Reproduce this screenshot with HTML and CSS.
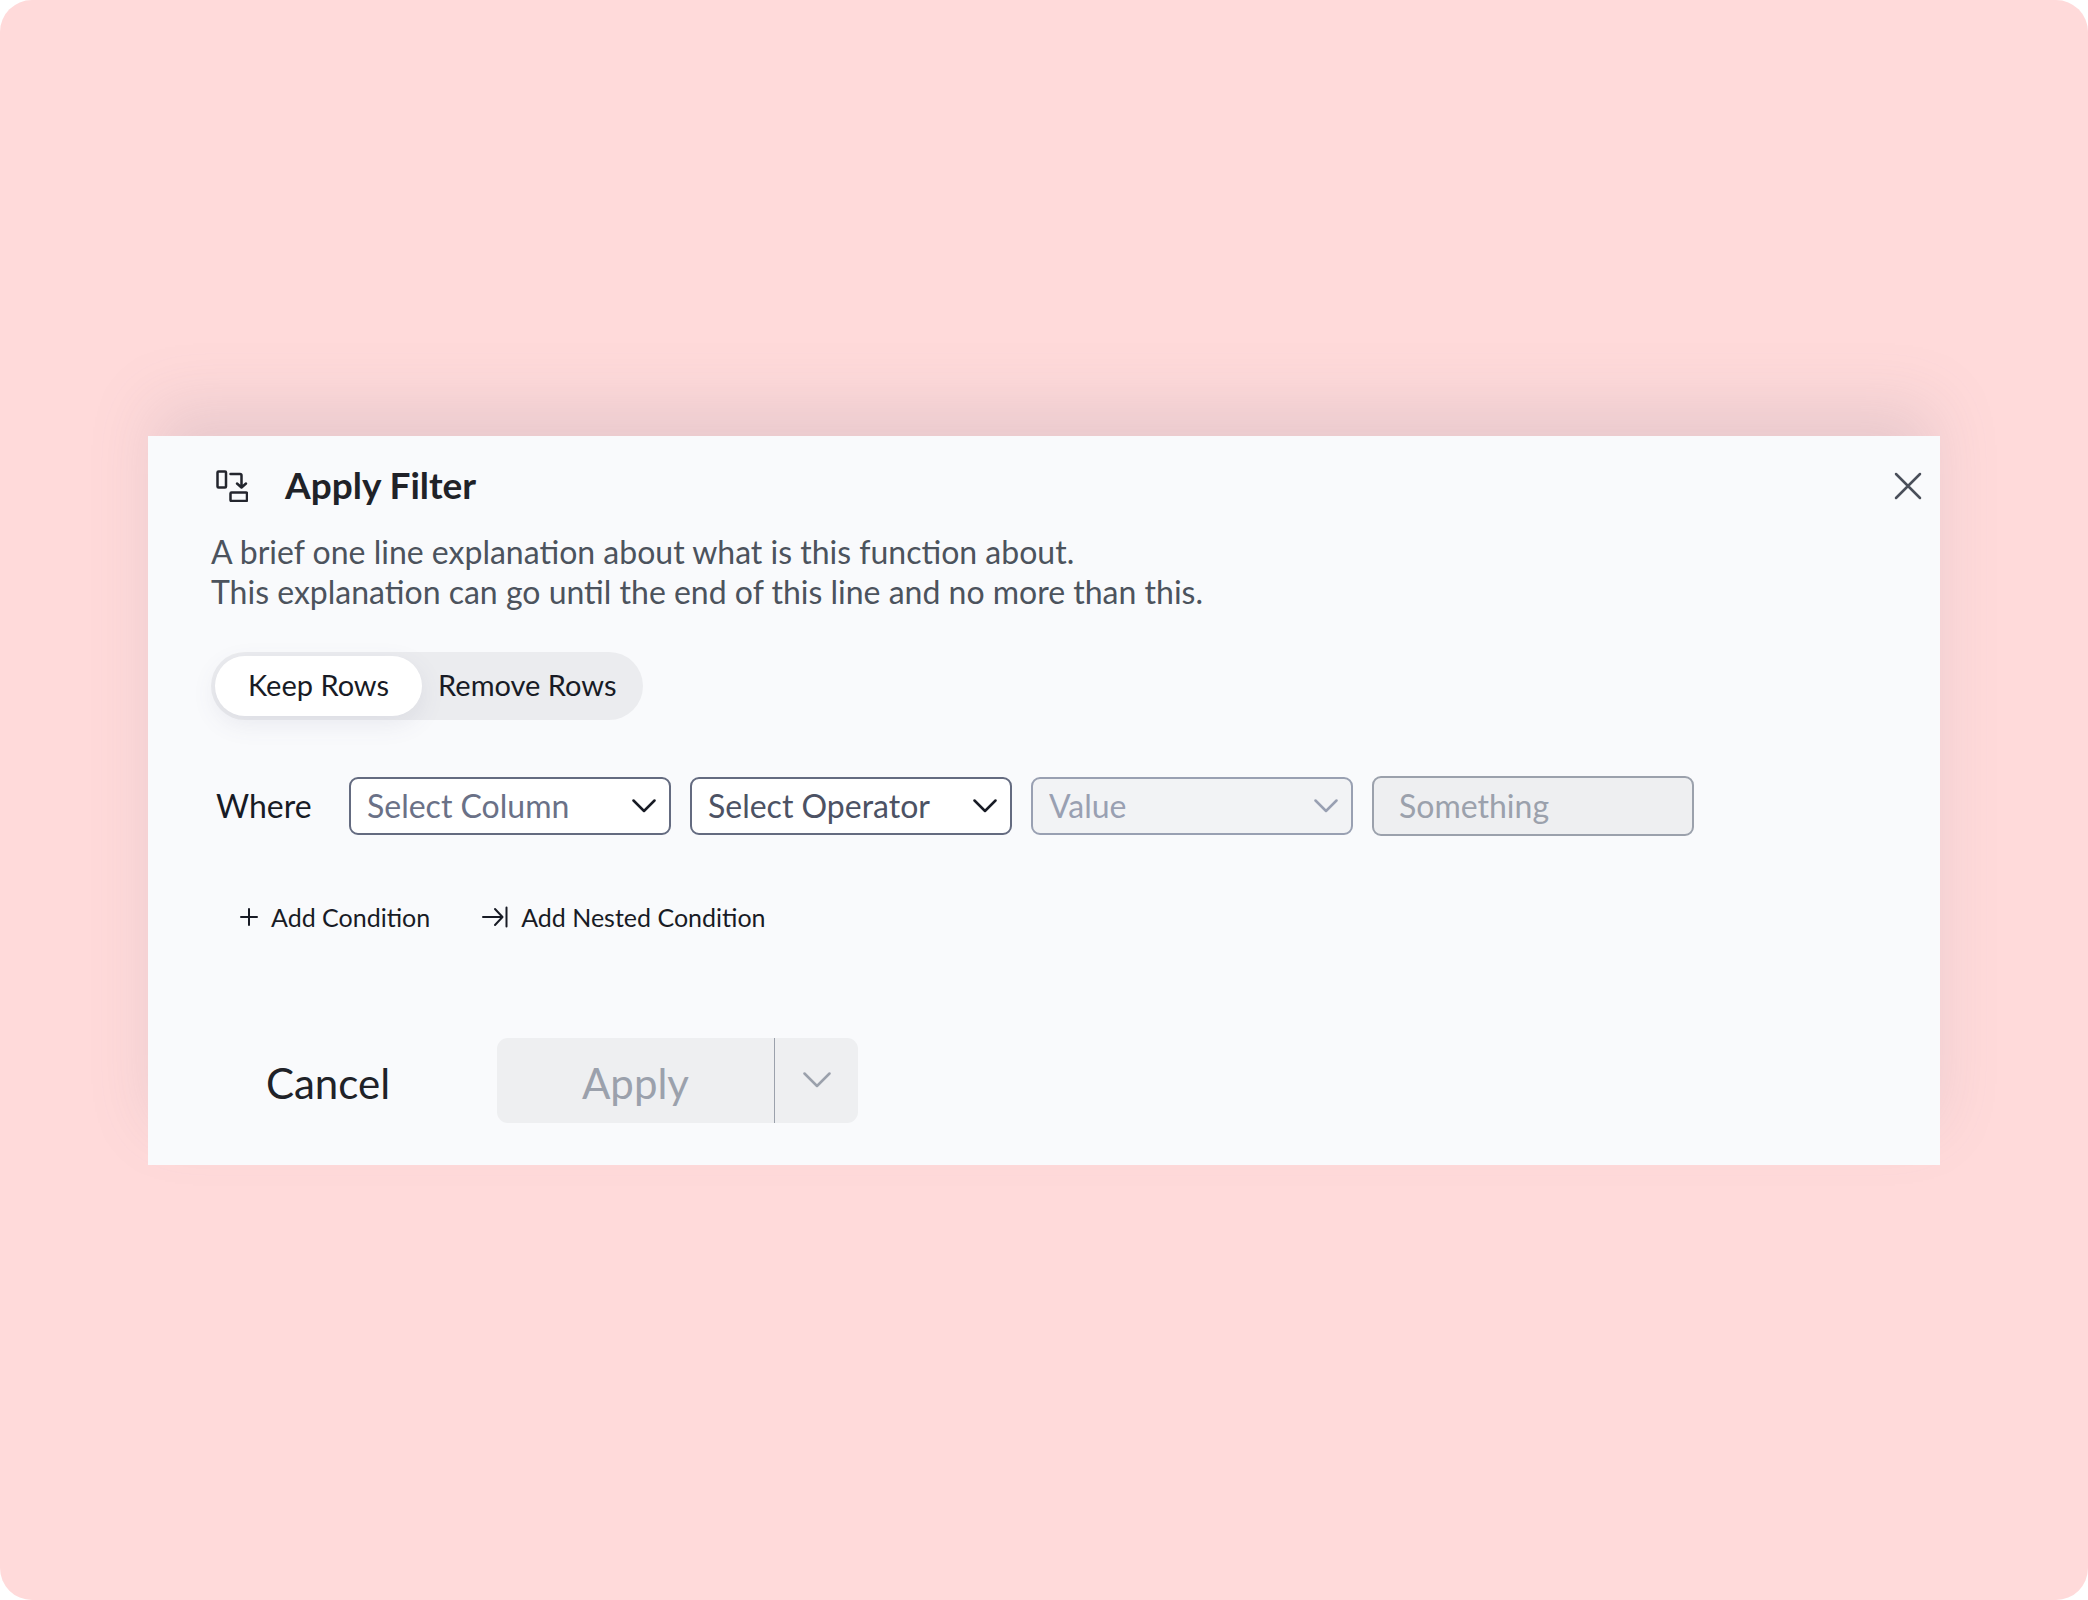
FILE: index.html
```html
<!DOCTYPE html>
<html lang="en">
<head>
<meta charset="utf-8">
<meta name="viewport" content="width=device-width, initial-scale=1">
<title>Apply Filter</title>
<link rel="stylesheet" href="styles.css">
</head>
<body>
<main class="stage">
  <form class="dialog" role="dialog" aria-labelledby="dialog-title">
    <header class="dialog-header">
      <svg class="filter-icon" viewBox="0 0 32 32" aria-hidden="true">
        <rect x="1.500" y="1.500" width="8.500" height="16" rx="1"/>
        <rect x="14.500" y="22.500" width="16.500" height="8.500" rx="1"/>
        <path d="M14.500 4H24q1.500 0 1.500 1.500V17M21 13.500l4.500 4 4.500-4"/>
      </svg>
      <h1 class="dialog-title" id="dialog-title">Apply Filter</h1>
      <button class="close" type="button" aria-label="Close">
        <svg viewBox="0 0 28 28" aria-hidden="true"><path d="M2 2l24 24M26 2L2 26"/></svg>
      </button>
    </header>

    <p class="description">A brief one line explanation about what is this function about.<br>This explanation can go until the end of this line and no more than this.</p>

    <div class="toggle" role="radiogroup" aria-label="Row mode">
      <label class="toggle-option"><input type="radio" name="mode" checked><span class="toggle-label">Keep Rows</span></label>
      <label class="toggle-option"><input type="radio" name="mode"><span class="toggle-label">Remove Rows</span></label>
    </div>

    <div class="condition">
      <label class="where" for="column">Where</label>
      <div class="fields">
        <div class="field">
          <select class="control placeholder" id="column"><option>Select Column</option></select>
          <svg class="chevron" viewBox="0 0 24 14" aria-hidden="true"><path d="M1.500 1.500L12 12 22.500 1.500"/></svg>
        </div>
        <div class="field">
          <select class="control" aria-label="Operator"><option>Select Operator</option></select>
          <svg class="chevron" viewBox="0 0 24 14" aria-hidden="true"><path d="M1.500 1.500L12 12 22.500 1.500"/></svg>
        </div>
        <div class="field">
          <select class="control" aria-label="Value" disabled><option>Value</option></select>
          <svg class="chevron muted" viewBox="0 0 24 14" aria-hidden="true"><path d="M1.500 1.500L12 12 22.500 1.500"/></svg>
        </div>
        <div class="field">
          <input class="control text-input" type="text" aria-label="Something" placeholder="Something" disabled>
        </div>
      </div>
    </div>

    <div class="add-actions">
      <button class="add" type="button">
        <svg class="plus" viewBox="0 0 18 18" aria-hidden="true"><path d="M9 1v16M1 9h16"/></svg>
        Add Condition
      </button>
      <button class="add" type="button">
        <svg class="nest" viewBox="0 0 26 22" aria-hidden="true"><path d="M1 11h19M13 3l7.500 8L13 19M24.500 1.500v19"/></svg>
        Add Nested Condition
      </button>
    </div>

    <footer class="dialog-footer">
      <button class="cancel" type="button">Cancel</button>
      <div class="split">
        <button class="apply" type="submit" disabled>Apply</button>
        <button class="apply-more" type="button" aria-label="More apply options" disabled>
          <svg viewBox="0 0 28 16" aria-hidden="true"><path d="M1.500 1.500L14 14 26.500 1.500"/></svg>
        </button>
      </div>
    </footer>
  </form>
</main>
</body>
</html>
```

FILE: styles.css
```css
* {
  box-sizing: border-box;
}

body {
  margin: 0;
  background: #fff;
  color: #181b25;
  font-family: Lato, "Liberation Sans", sans-serif;
  font-size: 32px;
  line-height: 40px;
}

button,
input,
select {
  margin: 0;
  font: inherit;
  color: inherit;
}

button {
  padding: 0;
  border: 0;
  background: none;
}

svg {
  display: block;
  flex: none;
  fill: none;
  stroke: currentColor;
  stroke-width: 2;
  stroke-linecap: round;
  stroke-linejoin: round;
}

.stage {
  display: flex;
  align-items: center;
  min-height: 100vh;
  padding: 32px 148px;
  border-radius: 32px;
  background: #ffdada;
}

.dialog {
  flex: 1;
  min-width: 0;
  padding: 24px 16px 42px 63px;
  background: #f9fafc;
  box-shadow: 0 -36px 60px -6px rgba(120, 120, 140, 0.17);
}

.dialog-header {
  display: flex;
  align-items: center;
  height: 52px;
  padding-left: 5px;
}

.filter-icon {
  width: 32px;
  height: 32px;
  color: #23252d;
  stroke-width: 2.5;
}

.dialog-title {
  margin: 0 auto 0 37px;
  padding-bottom: 2px;
  color: #202228;
  font-size: 37px;
  font-weight: 700;
}

.close {
  padding: 2px;
  color: #4a4f5a;
}

.close svg {
  width: 28px;
  height: 28px;
  stroke-width: 2.5;
}

.description {
  margin: 20px 0 40px;
  color: #4c535d;
}

.toggle {
  display: inline-flex;
  padding: 4px;
  border-radius: 34px;
  background: #ebecef;
  font-size: 29px;
}

.toggle-option input {
  position: absolute;
  opacity: 0;
}

.toggle-label {
  display: block;
  padding: 9px 22px 11px 16px;
  border-radius: 30px;
}

.toggle-option input:checked + .toggle-label {
  padding: 9px 33px 11px;
  background: #fff;
  box-shadow: 0 8px 24px rgba(88, 92, 130, 0.1);
}

.condition {
  display: flex;
  align-items: center;
  margin-top: 56px;
  padding-left: 5px;
}

.where {
  width: 133px;
}

.fields {
  display: flex;
  flex: 1;
  gap: 19px;
}

.field {
  display: grid;
  flex: 0 1 322px;
  align-items: center;
  min-width: 0;
}

.control {
  grid-area: 1 / 1;
  width: 100%;
  height: 58px;
  padding: 0 52px 0 16px;
  border: 2px solid #646b80;
  border-radius: 9px;
  appearance: none;
  background: #fff;
  color: #4c5264;
}

.control.placeholder {
  color: #6a7187;
}

.control:disabled {
  border-color: #99a0b2;
  background: #f2f3f5;
  color: #99a0b2;
  opacity: 1;
}

.control.text-input:disabled {
  height: 60px;
  padding: 0 25px;
  border-color: #9ba1ac;
  background: #eeeff1;
}

.control::placeholder {
  color: #9ba1ac;
  opacity: 1;
}

.chevron {
  grid-area: 1 / 1;
  justify-self: end;
  width: 24px;
  height: 14px;
  margin-right: 15px;
  stroke-width: 2.5;
  pointer-events: none;
}

.chevron.muted {
  color: #99a0b2;
}

.add-actions {
  display: flex;
  gap: 52px;
  margin-top: 61px;
  padding-left: 29px;
  font-size: 25px;
}

.add {
  display: flex;
  align-items: center;
  gap: 13px;
}

.plus {
  width: 18px;
  height: 18px;
}

.nest {
  width: 26px;
  height: 22px;
}

.dialog-footer {
  display: flex;
  gap: 53px;
  margin-top: 101px;
  padding-left: 1px;
  font-size: 42px;
}

.cancel {
  width: 232px;
  padding-top: 6px;
  color: #202228;
}

.split {
  display: flex;
  height: 85px;
  border-radius: 11px;
  background: #eeeff1;
  color: #9ba1ac;
}

.apply {
  width: 277px;
  padding-top: 6px;
}

.apply-more {
  display: grid;
  place-items: center;
  width: 84px;
  border-left: 1px solid #9ba1ac;
}

.apply-more svg {
  width: 28px;
  height: 16px;
  stroke-width: 2.5;
}
```
